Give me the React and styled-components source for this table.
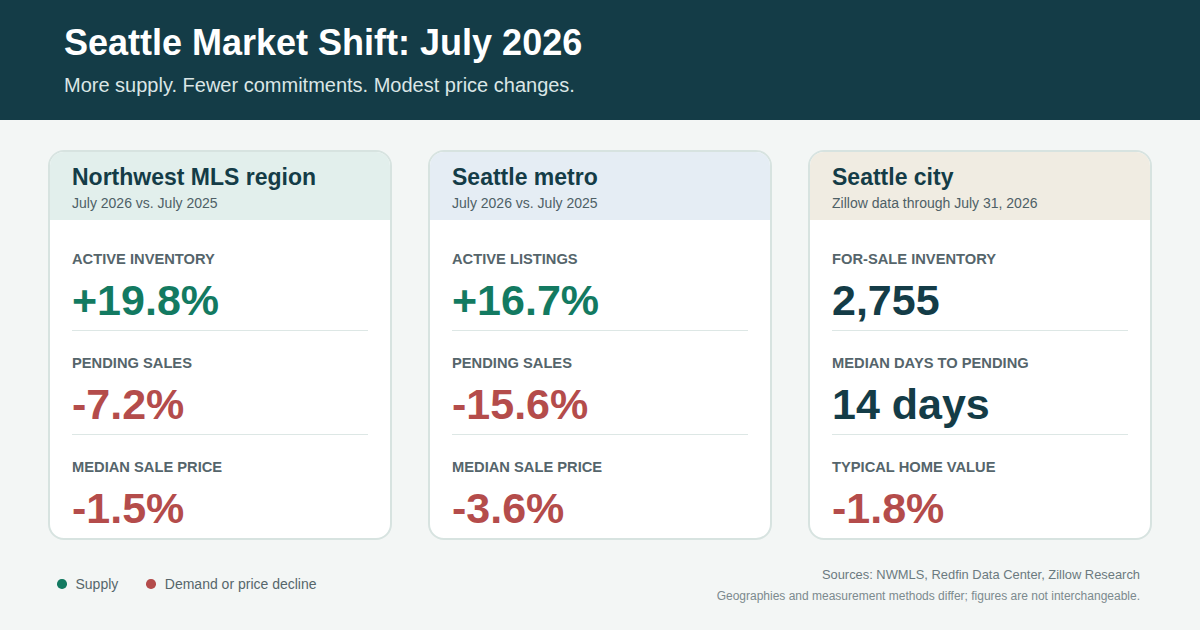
import React from 'react';
import styled, { createGlobalStyle } from 'styled-components';

const GlobalStyle = createGlobalStyle`
    html, body {
        margin: 0;
        padding: 0;
        background: #f3f6f5;
        font-family: 'Liberation Sans', Arial, sans-serif;
    }
`;

const palette = {
    ink: '#143c47',
    green: '#137a61',
    red: '#b44c4b',
    label: '#55656b',
    muted: '#6b7a7f',
    line: '#dde7e5',
};

const Page = styled.div`
    width: 1200px;
    height: 630px;
    overflow: hidden;
    background: #f3f6f5;
`;

const Banner = styled.header`
    height: 120px;
    box-sizing: border-box;
    background: ${palette.ink};
    padding: 22px 64px 0;
    color: white;

    > h1 {
        margin: 0;
        font-size: 36px;
        line-height: 42px;
        font-weight: 700;
    }

    > p {
        margin: 9px 0 0;
        font-size: 20px;
        line-height: 24px;
        color: #dbe6e6;
    }
`;

const Cards = styled.div`
    display: grid;
    grid-template-columns: repeat(3, 344px);
    gap: 36px;
    padding: 30px 48px 0;
`;

const Card = styled.section`
    height: 390px;
    box-sizing: border-box;
    background: white;
    border: 2px solid #d7e3e0;
    border-radius: 16px;
    overflow: hidden;
    display: flex;
    flex-direction: column;
`;

const CardHead = styled.div`
    height: 68px;
    box-sizing: border-box;
    background: ${(p) => p.$tint};
    padding: 11px 22px 0;

    > h2 {
        margin: 0;
        font-size: 23px;
        line-height: 28px;
        font-weight: 700;
        color: ${palette.ink};
    }

    > span {
        display: block;
        margin-top: 4px;
        font-size: 14px;
        line-height: 17px;
        color: #4e6066;
    }
`;

const CardBody = styled.div`
    padding: 30px 22px 0;
`;

const Stat = styled.div`
    padding: 23px 0 6px;
    border-bottom: 1px solid ${palette.line};

    &:first-child {
        padding-top: 0;
    }

    &:last-child {
        border-bottom: none;
    }

    > span {
        display: block;
        font-size: 14.7px;
        line-height: 18px;
        font-weight: 700;
        color: ${palette.label};
    }

    > strong {
        display: block;
        margin-top: 8px;
        font-size: 43px;
        line-height: 48px;
        font-weight: 700;
        color: ${(p) => p.$color};
    }
`;

const Footer = styled.footer`
    display: flex;
    align-items: flex-start;
    justify-content: space-between;
    padding: 27px 60px 0 57px;
`;

const Legend = styled.div`
    display: flex;
    gap: 28px;
    padding-top: 8px;
`;

const LegendItem = styled.span`
    display: flex;
    align-items: center;
    gap: 9px;
    font-size: 14px;
    line-height: 18px;
    color: #56666b;

    &::before {
        content: '';
        width: 9.5px;
        height: 9.5px;
        border-radius: 50%;
        background: ${(p) => p.$color};
    }
`;

const Sources = styled.div`
    text-align: right;
    color: ${palette.muted};

    > p {
        margin: 0;
        font-size: 12.9px;
        line-height: 16px;
    }

    > p + p {
        margin-top: 5px;
        font-size: 12px;
        color: #7c8a8e;
    }
`;

const regions = [
    {
        name: 'Northwest MLS region',
        note: 'July 2026 vs. July 2025',
        tint: '#e2efec',
        stats: [
            ['Active inventory', '+19.8%', palette.green],
            ['Pending sales', '-7.2%', palette.red],
            ['Median sale price', '-1.5%', palette.red],
        ],
    },
    {
        name: 'Seattle metro',
        note: 'July 2026 vs. July 2025',
        tint: '#e5edf4',
        stats: [
            ['Active listings', '+16.7%', palette.green],
            ['Pending sales', '-15.6%', palette.red],
            ['Median sale price', '-3.6%', palette.red],
        ],
    },
    {
        name: 'Seattle city',
        note: 'Zillow data through July 31, 2026',
        tint: '#f0ece2',
        stats: [
            ['For-sale inventory', '2,755', palette.ink],
            ['Median days to pending', '14 days', palette.ink],
            ['Typical home value', '-1.8%', palette.red],
        ],
    },
];

const App = () => {
    return (
        <Page>
            <GlobalStyle />
            <Banner>
                <h1>Seattle Market Shift: July 2026</h1>
                <p>More supply. Fewer commitments. Modest price changes.</p>
            </Banner>
            <Cards>
                {regions.map((r) => (
                    <Card key={r.name}>
                        <CardHead $tint={r.tint}>
                            <h2>{r.name}</h2>
                            <span>{r.note}</span>
                        </CardHead>
                        <CardBody>
                            {r.stats.map(([label, value, color]) => (
                                <Stat key={label} $color={color}>
                                    <span>{label.toUpperCase()}</span>
                                    <strong>{value}</strong>
                                </Stat>
                            ))}
                        </CardBody>
                    </Card>
                ))}
            </Cards>
            <Footer>
                <Legend>
                    <LegendItem $color={palette.green}>Supply</LegendItem>
                    <LegendItem $color={palette.red}>Demand or price decline</LegendItem>
                </Legend>
                <Sources>
                    <p>Sources: NWMLS, Redfin Data Center, Zillow Research</p>
                    <p>Geographies and measurement methods differ; figures are not interchangeable.</p>
                </Sources>
            </Footer>
        </Page>
    );
};

export default App;
